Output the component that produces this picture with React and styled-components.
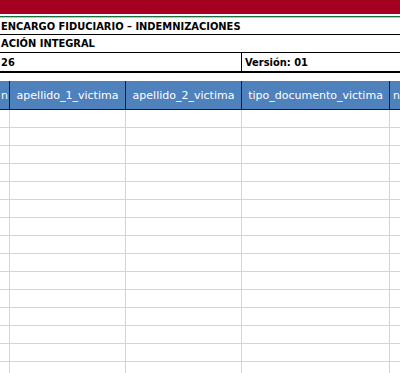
import React from 'react';
import styled, { createGlobalStyle } from 'styled-components';

const GlobalStyle = createGlobalStyle`
  html, body {
    margin: 0;
    padding: 0;
    background: #fff;
  }
  body {
    width: 400px;
    height: 373px;
    overflow: hidden;
  }
`;

const Sheet = styled.div`
  width: 400px;
  height: 373px;
  overflow: hidden;
  background: #fff;
  display: flex;
  flex-direction: column;
  & > * {
    flex-shrink: 0;
  }
`;

const Banner = styled.div`
  height: 14px;
  background: #a50021;
`;

const Stripe = styled.div`
  margin-top: 2px;
  height: 1px;
  background: #1e6b3c;
  box-shadow: 0 1px 0 rgba(30, 107, 60, 0.35);
  margin-bottom: 1px;
`;

const InfoRow = styled.div`
  display: flex;
  height: ${props => props.h}px;
  border-bottom: ${props => props.thick ? 2 : 1}px solid #000;
  font-family: "DejaVu Sans Condensed", "DejaVu Sans", sans-serif;
  font-weight: bold;
  font-size: 11px;
  color: #000;
`;

const InfoCell = styled.div`
  display: flex;
  align-items: center;
  padding-left: ${props => props.pad || 1}px;
  box-sizing: border-box;
  width: ${props => props.w ? props.w + 'px' : 'auto'};
  flex: ${props => props.w ? 'none' : 1};
  border-right: ${props => props.divider ? '1px solid #000' : 'none'};
  white-space: nowrap;
  overflow: hidden;
`;

const Gap = styled.div`
  height: 8px;
`;

const cols = '10px 116px 116px 148px 1fr';

const HeaderRow = styled.div`
  display: grid;
  grid-template-columns: ${cols};
  height: 29px;
  box-sizing: border-box;
  background: #4f81bd;
  border-bottom: 1px solid #1a1a1a;
  font-family: "DejaVu Sans", sans-serif;
  font-size: 11px;
  color: #fff;
`;

const HeadCell = styled.div`
  display: flex;
  align-items: center;
  justify-content: ${props => props.align || 'center'};
  padding: 0 ${props => props.align ? 1 : 0}px 0 ${props => props.align === 'flex-start' ? 3 : 0}px;
  border-right: 1px solid #1a1a1a;
  white-space: nowrap;
  overflow: hidden;
  &:last-child {
    border-right: none;
  }
`;

const DataRow = styled.div`
  display: grid;
  grid-template-columns: ${cols};
  height: 18px;
  box-sizing: border-box;
  border-bottom: 1px solid #d4d4d4;
`;

const DataCell = styled.div`
  border-right: 1px solid #d4d4d4;
  &:last-child {
    border-right: none;
  }
`;

const headers = ['n', 'apellido_1_victima', 'apellido_2_victima', 'tipo_documento_victima', 'n'];

export default function App() {
  const rows = Array.from({ length: 15 });
  return (
    <>
      <GlobalStyle />
      <Sheet>
        <Banner />
        <Stripe />
        <InfoRow h={16}>
          <InfoCell>ENCARGO FIDUCIARIO – INDEMNIZACIONES</InfoCell>
        </InfoRow>
        <InfoRow h={17}>
          <InfoCell>ACIÓN INTEGRAL</InfoCell>
        </InfoRow>
        <InfoRow h={18} thick>
          <InfoCell w={242} divider>26</InfoCell>
          <InfoCell pad={3}>Versión: 01</InfoCell>
        </InfoRow>
        <Gap />
        <HeaderRow>
          {headers.map((h, i) => (
            <HeadCell
              key={i}
              align={i === 0 ? 'flex-end' : i === headers.length - 1 ? 'flex-start' : undefined}
            >
              {h}
            </HeadCell>
          ))}
        </HeaderRow>
        {rows.map((_, r) => (
          <DataRow key={r}>
            {headers.map((_, c) => <DataCell key={c} />)}
          </DataRow>
        ))}
      </Sheet>
    </>
  );
}
